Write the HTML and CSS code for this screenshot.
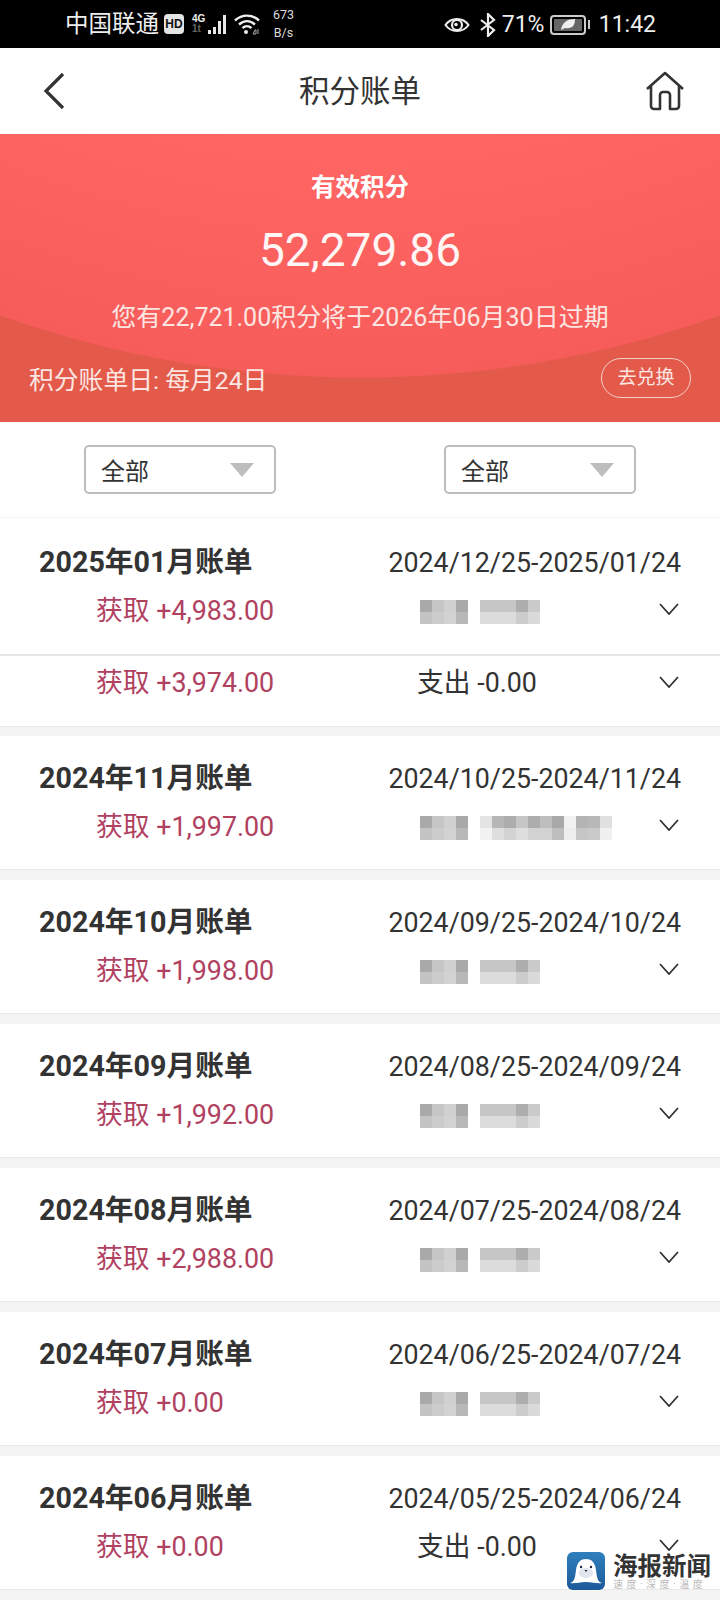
FILE: index.html
```html
<!DOCTYPE html>
<html lang="zh-CN">
<head>
<meta charset="utf-8">
<title>积分账单</title>
<link rel="stylesheet" href="styles.css">
</head>
<body>
<svg class="defs" width="0" height="0" aria-hidden="true">
  <symbol id="m-short" viewBox="0 0 120 24">
    <rect x="0" width="12" height="12" fill="#a9a9a9"/><rect x="12" width="12" height="12" fill="#c6c6c6"/><rect x="24" width="12" height="12" fill="#d0d0d0"/><rect x="36" width="12" height="12" fill="#a9a9a9"/>
    <rect x="60" width="36" height="12" fill="#c6c6c6"/><rect x="96" width="12" height="12" fill="#aeaeae"/><rect x="108" width="12" height="12" fill="#cacaca"/>
    <rect x="0" y="12" width="12" height="12" fill="#c4c4c4"/><rect x="12" y="12" width="12" height="12" fill="#cccccc"/><rect x="24" y="12" width="12" height="12" fill="#d2d2d2"/><rect x="36" y="12" width="12" height="12" fill="#b8b8b8"/>
    <rect x="60" y="12" width="36" height="12" fill="#dcdcdc"/><rect x="96" y="12" width="12" height="12" fill="#cccccc"/><rect x="108" y="12" width="12" height="12" fill="#dadada"/>
  </symbol>
  <symbol id="m-long" viewBox="0 0 192 24">
    <rect x="0" width="12" height="12" fill="#a9a9a9"/><rect x="12" width="12" height="12" fill="#c6c6c6"/><rect x="24" width="12" height="12" fill="#d0d0d0"/><rect x="36" width="12" height="12" fill="#a9a9a9"/>
    <rect x="60" width="12" height="12" fill="#e4e4e4"/><rect x="72" width="12" height="12" fill="#b6b6b6"/><rect x="84" width="12" height="12" fill="#adadad"/><rect x="96" width="12" height="12" fill="#c6c6c6"/><rect x="108" width="12" height="12" fill="#adadad"/><rect x="120" width="12" height="12" fill="#bebebe"/><rect x="132" width="12" height="12" fill="#a9a9a9"/><rect x="144" width="12" height="12" fill="#f2f2f2"/><rect x="156" width="12" height="12" fill="#b4b4b4"/><rect x="168" width="12" height="12" fill="#b8b8b8"/><rect x="180" width="12" height="12" fill="#e0e0e0"/>
    <rect x="0" y="12" width="12" height="12" fill="#c4c4c4"/><rect x="12" y="12" width="12" height="12" fill="#cccccc"/><rect x="24" y="12" width="12" height="12" fill="#d2d2d2"/><rect x="36" y="12" width="12" height="12" fill="#b8b8b8"/>
    <rect x="60" y="12" width="12" height="12" fill="#f2f2f2"/><rect x="72" y="12" width="12" height="12" fill="#dedede"/><rect x="84" y="12" width="12" height="12" fill="#d2d2d2"/><rect x="96" y="12" width="12" height="12" fill="#dedede"/><rect x="108" y="12" width="12" height="12" fill="#d2d2d2"/><rect x="120" y="12" width="12" height="12" fill="#d2d2d2"/><rect x="132" y="12" width="12" height="12" fill="#bebebe"/><rect x="144" y="12" width="12" height="12" fill="#eeeeee"/><rect x="156" y="12" width="12" height="12" fill="#c6c6c6"/><rect x="168" y="12" width="12" height="12" fill="#cacaca"/><rect x="180" y="12" width="12" height="12" fill="#f0f0f0"/>
  </symbol>
  <symbol id="chev" viewBox="0 0 20 12">
    <path d="M1 1l9 10 9-10" fill="none" stroke="#333" stroke-width="1.8"/>
  </symbol>
</svg>

<div class="page">
  <header class="status">
    <span class="carrier">中国联通</span>
    <span class="hd">HD</span>
    <span class="net"><b>4G</b><i>1t</i></span>
    <svg class="signal" width="19" height="22" viewBox="0 0 19 22"><path d="M0 17h3v4H0zM5 14h3v7H5zM10 8h3v13h-3zM15 2h3v19h-3z" fill="#e8e8e8"/></svg>
    <svg class="wifi" width="26" height="22" viewBox="0 0 26 22"><path d="M1 7.500C8 1 18 1 25 7.500M5 11.500c5-4.500 11-4.500 16 0M8.500 15c3-2.500 6-2.500 9 0" fill="none" stroke="#eee" stroke-width="2.400"/><circle cx="12" cy="19" r="2" fill="#eee"/><path d="M19 21l2-4h1v4zM24 16v5" stroke="#aaa" stroke-width="1" fill="none"/></svg>
    <span class="speed"><span>673</span><span>B/s</span></span>
    <div class="status-right">
      <svg width="26" height="20" viewBox="0 0 26 20"><path d="M1.500 10C7 2 19 2 24.500 10 19 18 7 18 1.500 10z" fill="none" stroke="#eee" stroke-width="2"/><circle cx="13" cy="10" r="5" fill="none" stroke="#eee" stroke-width="2.200"/><circle cx="12" cy="9.500" r="1.800" fill="#eee"/></svg>
      <svg class="bt" width="18" height="24" viewBox="0 0 18 24"><path d="M2 7l13 10-6 6V1l6 6L2 17" fill="none" stroke="#eee" stroke-width="2.200"/></svg>
      <span class="pct">71%</span>
      <span class="battery"><span class="cell"><svg width="16" height="13" viewBox="0 0 16 13"><path d="M1 12C2 4 8 1 15 1c0 7-3 10-10 9z" fill="#eee"/></svg></span></span>
      <span class="tip"></span>
      <span class="time">11:42</span>
    </div>
  </header>

  <nav class="nav">
    <svg class="back" width="24" height="38" viewBox="0 0 24 38"><path d="M21 2L4 19l17 17" fill="none" stroke="#333" stroke-width="3.200"/></svg>
    <h1 class="nav-title">积分账单</h1>
    <svg class="home" width="40" height="40" viewBox="0 0 40 40"><path d="M2 18L20 2l18 16M6 15v20a3 3 0 0 0 3 3h6V24a3 3 0 0 1 3-3h4a3 3 0 0 1 3 3v14h6a3 3 0 0 0 3-3V15" fill="none" stroke="#333" stroke-width="2.600" stroke-linejoin="round"/></svg>
  </nav>

  <section class="hero">
    <div class="hero-label">有效积分</div>
    <div class="hero-value">52,279.86</div>
    <div class="hero-note">您有22,721.00积分将于2026年06月30日过期</div>
    <div class="hero-foot">
      <span class="bill-day">积分账单日: 每月24日</span>
      <span class="redeem">去兑换</span>
    </div>
  </section>

  <section class="filters">
    <div class="select"><span>全部</span><i class="tri"></i></div>
    <div class="select"><span>全部</span><i class="tri"></i></div>
  </section>

  <article class="card first">
    <div class="head"><strong>2025年01月账单</strong><span>2024/12/25-2025/01/24</span></div>
    <div class="line"><span class="gain">获取 +4,983.00</span><svg class="mosaic" width="120" height="24"><use href="#m-short"/></svg><svg class="chev" width="20" height="12"><use href="#chev"/></svg></div>
    <div class="line second"><span class="gain">获取 +3,974.00</span><span class="spend">支出 -0.00</span><svg class="chev" width="20" height="12"><use href="#chev"/></svg></div>
  </article>

  <article class="card">
    <div class="head"><strong>2024年11月账单</strong><span>2024/10/25-2024/11/24</span></div>
    <div class="line"><span class="gain">获取 +1,997.00</span><svg class="mosaic" width="192" height="24"><use href="#m-long"/></svg><svg class="chev" width="20" height="12"><use href="#chev"/></svg></div>
  </article>

  <article class="card">
    <div class="head"><strong>2024年10月账单</strong><span>2024/09/25-2024/10/24</span></div>
    <div class="line"><span class="gain">获取 +1,998.00</span><svg class="mosaic" width="120" height="24"><use href="#m-short"/></svg><svg class="chev" width="20" height="12"><use href="#chev"/></svg></div>
  </article>

  <article class="card">
    <div class="head"><strong>2024年09月账单</strong><span>2024/08/25-2024/09/24</span></div>
    <div class="line"><span class="gain">获取 +1,992.00</span><svg class="mosaic" width="120" height="24"><use href="#m-short"/></svg><svg class="chev" width="20" height="12"><use href="#chev"/></svg></div>
  </article>

  <article class="card">
    <div class="head"><strong>2024年08月账单</strong><span>2024/07/25-2024/08/24</span></div>
    <div class="line"><span class="gain">获取 +2,988.00</span><svg class="mosaic" width="120" height="24"><use href="#m-short"/></svg><svg class="chev" width="20" height="12"><use href="#chev"/></svg></div>
  </article>

  <article class="card">
    <div class="head"><strong>2024年07月账单</strong><span>2024/06/25-2024/07/24</span></div>
    <div class="line"><span class="gain">获取 +0.00</span><svg class="mosaic" width="120" height="24"><use href="#m-short"/></svg><svg class="chev" width="20" height="12"><use href="#chev"/></svg></div>
  </article>

  <article class="card">
    <div class="head"><strong>2024年06月账单</strong><span>2024/05/25-2024/06/24</span></div>
    <div class="line"><span class="gain">获取 +0.00</span><span class="spend">支出 -0.00</span><svg class="chev" width="20" height="12"><use href="#chev"/></svg></div>
  </article>

  <div class="watermark">
    <svg class="wm-logo" width="38" height="38" viewBox="0 0 38 38">
      <defs><linearGradient id="wm" x1="0" y1="0" x2="0" y2="1"><stop offset="0" stop-color="#2f7fbd"/><stop offset="1" stop-color="#1d5a9a"/></linearGradient></defs>
      <rect width="38" height="38" rx="6" fill="url(#wm)"/>
      <path d="M3 31c4-1 5-4 6-13C10 10 14 7 19 7s9 3 10 11c1 9 2 12 6 13-5 1-9-1-16-1s-11 2-16 1z" fill="#fff"/>
      <ellipse cx="19" cy="21" rx="7" ry="5" fill="#dfe6ee"/>
      <circle cx="14" cy="15" r="1.200" fill="#223"/><circle cx="24" cy="15" r="1.200" fill="#223"/><path d="M17.500 18h3l-1.500 2z" fill="#223"/>
    </svg>
    <div class="wm-text">
      <span class="wm-name">海报新闻</span>
      <span class="wm-sub">速度·深度·温度</span>
    </div>
  </div>
</div>
</body>
</html>
```

FILE: styles.css
```css
* { box-sizing: border-box; }
html, body { margin: 0; padding: 0; }
body {
  font-family: Roboto, "Noto Sans CJK SC", sans-serif;
  background: #f4f4f4;
  color: #333;
}
.defs { position: absolute; }
.page {
  position: relative;
  width: 720px;
  height: 1600px;
  overflow: hidden;
}

/* status bar */
.status {
  height: 48px;
  background: #000;
  color: #eee;
  display: flex;
  align-items: center;
  padding: 0 64px 0 65px;
}
.carrier { font-size: 23.500px; line-height: 48px; width: 99px; }
.hd {
  width: 20px;
  height: 20px;
  border-radius: 4px;
  background: #e4e4e4;
  color: #111;
  font: 700 12px/20px "Liberation Sans", sans-serif;
  text-align: center;
}
.net {
  display: flex;
  flex-direction: column;
  width: 15px;
  margin-left: 8px;
  font: 700 10px/10px "Liberation Sans", sans-serif;
}
.net b { color: #eee; }
.net i { color: #666; font-style: normal; }
.signal { margin-left: 1px; }
.wifi { margin-left: 7px; }
.speed {
  display: flex;
  flex-direction: column;
  align-items: center;
  margin-left: 11px;
  width: 25px;
  font-size: 12.500px;
  line-height: 18px;
  color: #ddd;
}
.status-right {
  display: flex;
  align-items: center;
  margin-left: auto;
  padding-top: 1px;
}
.bt { margin-left: 9px; }
.pct { font-size: 23px; margin-left: 5px; width: 48px; }
.battery {
  width: 36px;
  height: 20px;
  border: 2px solid #ccc;
  border-radius: 4px;
  padding: 2px;
}
.cell {
  display: flex;
  align-items: center;
  justify-content: center;
  width: 100%;
  height: 100%;
  background: #666;
  border-radius: 1px;
}
.tip { width: 2px; height: 9px; margin-left: 2px; background: #ccc; }
.time { font-size: 23px; margin-left: 9px; }

/* nav */
.nav {
  height: 86px;
  background: #fff;
  display: flex;
  align-items: center;
  justify-content: space-between;
  padding: 0 35px 0 42px;
}
.nav-title {
  flex: 1;
  margin: 0;
  text-align: center;
  font-size: 30.500px;
  font-weight: 400;
  line-height: 88px;
  height: 86px;
  padding-left: 9px;
}

/* hero */
.hero {
  height: 288px;
  color: #fff;
  background: radial-gradient(circle 1076px at 50% -832px, #ff6664 0, #ff6664 77%, #f65c5a 99.900%, #e35a4b 100%);
  display: flex;
  flex-direction: column;
  align-items: center;
}
.hero-label { margin-top: 36px; font-size: 24.500px; font-weight: 700; line-height: 36px; }
.hero-value { margin-top: 16px; font-size: 46px; line-height: 56px; color: #fff6f5; }
.hero-note { margin-top: 22px; font-size: 25px; line-height: 36px; color: #fbe6e2; }
.hero-foot {
  align-self: stretch;
  display: flex;
  align-items: center;
  justify-content: space-between;
  margin-top: 21px;
  padding: 0 29px;
}
.bill-day { font-size: 24.800px; line-height: 36px; color: #fbe6e2; margin-top: 6px; }
.redeem {
  width: 90px;
  height: 40px;
  border: 1px solid #f5cfc8;
  border-radius: 20px;
  font-size: 19px;
  line-height: 38px;
  text-align: center;
  color: #fbe6e2;
}

/* filters */
.filters {
  height: 96px;
  background: #fff;
  border-bottom: 1px solid #f5f5f5;
  display: grid;
  grid-template-columns: 1fr 1fr;
  justify-items: center;
  align-items: center;
}
.select {
  width: 192px;
  height: 49px;
  border: 2px solid #bdbdbd;
  border-radius: 5px;
  display: flex;
  align-items: center;
  justify-content: space-between;
  padding: 0 20px 0 15px;
  font-size: 24px;
}
.tri {
  width: 0;
  height: 0;
  border-left: 12px solid transparent;
  border-right: 12px solid transparent;
  border-top: 14px solid #bdbdbd;
}

/* cards */
.card {
  background: #fff;
  height: 134px;
  margin-bottom: 10px;
  padding: 22px 39px 0 39px;
  border-bottom: 1px solid #e9e9e9;
}
.card.first { height: 209px; padding-top: 24px; margin-bottom: 9px; }
.head {
  display: flex;
  align-items: baseline;
  justify-content: space-between;
  height: 40px;
}
.head strong { font-size: 28.700px; font-weight: 700; color: #333; line-height: 40px; }
.head span { font-size: 26.800px; color: #333; line-height: 40px; }
.line {
  display: flex;
  align-items: center;
  height: 40px;
  margin-top: 6px;
  padding-left: 57px;
}
.line.second {
  margin: 26px -39px 0;
  padding: 0 39px 5px 96px;
  height: 56px;
  border-top: 2px solid #e6e6e6;
}
.gain { width: 321px; flex: none; font-size: 26.800px; color: #b0415f; }
.spend { font-size: 26.800px; color: #333; }
.mosaic { margin: 7px 0 0 3px; }
.chev { margin: 2px 2px 0 auto; flex: none; }

/* watermark */
.watermark {
  position: absolute;
  left: 567px;
  top: 1552px;
  display: flex;
  gap: 8px;
}
.wm-logo { flex: none; }
.wm-text { display: flex; flex-direction: column; margin-top: 2px; }
.wm-name { font-size: 24.500px; line-height: 26px; font-weight: 700; color: #333; white-space: nowrap; }
.wm-sub { font-size: 10px; line-height: 10px; letter-spacing: 3.500px; color: #bbb; white-space: nowrap; }
```
